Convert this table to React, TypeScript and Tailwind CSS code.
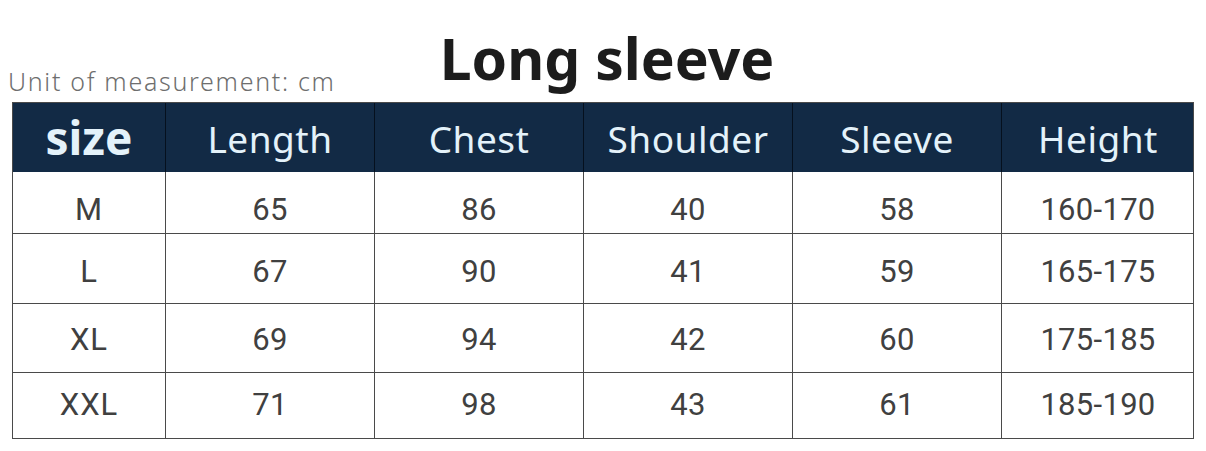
import React from 'react';

const headers = ['size', 'Length', 'Chest', 'Shoulder', 'Sleeve', 'Height'];

// Zeilenhöhen und Textversatz nach Vorlage abgemessen
const rows = [
  { h: 'h-[62px]', pt: 'pt-[15px]', cells: ['M', '65', '86', '40', '58', '160-170'] },
  { h: 'h-[70px]', pt: 'pt-[7px]', cells: ['L', '67', '90', '41', '59', '165-175'] },
  { h: 'h-[69px]', pt: 'pt-[5px]', cells: ['XL', '69', '94', '42', '60', '175-185'] },
  { h: 'h-[65px]', pt: 'pt-[0px]', cells: ['XXL', '71', '98', '43', '61', '185-190'] },
];

const cols = 'grid grid-cols-[153px_209px_209px_209px_209px_192px]';

export default function App() {
  return (
    <div className="w-[1206px] h-[451px] bg-white overflow-hidden">
      {/* Titel + Einheit */}
      <div className="grid grid-cols-[1fr_auto_1fr] items-end h-[102px] pl-[8px]">
        <div className="text-[25px] leading-none pb-[8px] text-[#6e6e6e] font-light font-['Noto_Sans',sans-serif] tracking-[1.7px]">
          Unit of measurement: cm
        </div>
        <div className="text-[57px] leading-none pb-[15px] font-bold text-[#1c1c1c] font-['Noto_Sans',sans-serif]">
          Long sleeve
        </div>
        <div />
      </div>

      {/* Tabelle */}
      <div className="ml-[12px] w-[1182px] border-[1.5px] border-[#4a4a4a]">
        <div className={`${cols} h-[69px] bg-[#122a45]`}>
          {headers.map((t, i) => (
            <div
              key={t}
              className={`flex items-center justify-center text-[#e4f2fa] font-['Noto_Sans',sans-serif] ${
                i === 0 ? 'text-[46px] font-bold' : 'text-[37px] tracking-[0.5px] pt-[3px]'
              } ${i < 5 ? 'border-r border-[#05101e]' : ''}`}
            >
              {t}
            </div>
          ))}
        </div>
        {rows.map((r, ri) => (
          <div key={ri} className={`${cols} ${r.h} ${ri < rows.length - 1 ? 'border-b-[1.5px] border-[#4a4a4a]' : ''}`}>
            {r.cells.map((c, ci) => (
              <div
                key={ci}
                className={`flex items-center justify-center text-[31px] text-[#404040] font-['Roboto',sans-serif] ${r.pt} ${
                  ci === 0 ? 'tracking-[1px]' : 'tracking-[0.3px]'
                } ${ci < 5 ? 'border-r-[1.5px] border-[#4a4a4a]' : ''}`}
              >
                {c}
              </div>
            ))}
          </div>
        ))}
      </div>
    </div>
  );
}
